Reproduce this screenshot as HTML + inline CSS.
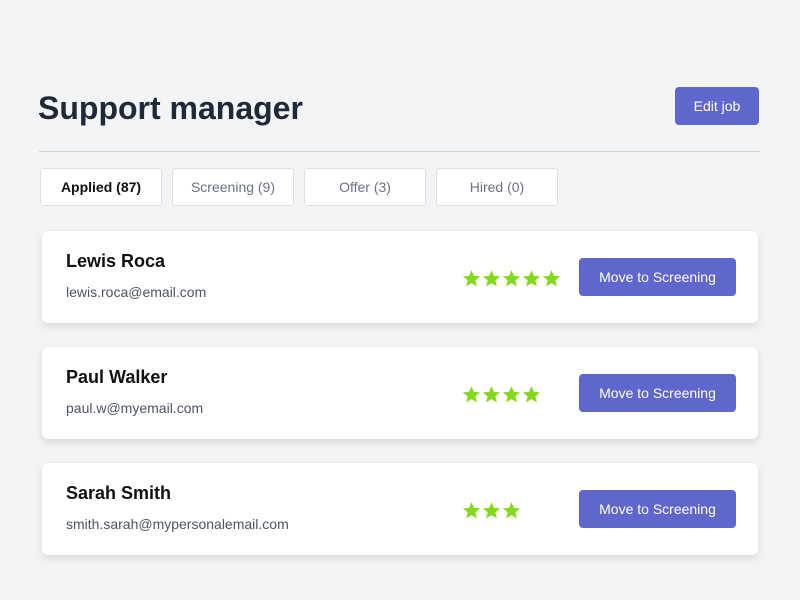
<!DOCTYPE html>
<html><head><style>
body{margin:0;width:800px;height:600px;background:#f3f4f6;font-family:"Liberation Sans",sans-serif;position:relative;overflow:hidden}
.abs{position:absolute}
h1{position:absolute;left:38px;top:88px;margin:0;font-size:32px;font-weight:bold;color:#1f2937;line-height:40px}
.edit{left:675px;top:87px;width:84px;height:38px;background:#5f67cd;color:#fff;border-radius:4px;font-size:14px;line-height:38px;text-align:center}
.line{left:39px;top:151px;width:721px;height:1px;background:#d1d5db}
.tab{top:168px;width:120px;height:36px;border:1px solid #dcdfe4;background:#fff;border-radius:3px;font-size:14px;line-height:36px;text-align:center;color:#6b7280}
.card{left:42px;width:716px;height:92px;background:#fff;border-radius:6px;box-shadow:0 3px 8px rgba(0,0,0,0.12)}
.name{position:absolute;left:24px;top:20px;font-size:18px;font-weight:bold;color:#111}
.mail{position:absolute;left:24px;top:53px;font-size:14px;color:#4b5563}
.stars{position:absolute;left:420px;top:38px;height:19px;display:flex;gap:1px}
.btn{position:absolute;left:537px;top:27px;width:157px;height:38px;background:#5f67cd;color:#fff;border-radius:4px;font-size:14px;line-height:38px;text-align:center}
</style></head><body>
<h1>Support manager</h1>
<div class="abs edit">Edit job</div>
<div class="abs line"></div>
<div class="abs tab" style="left:40px;color:#111;font-weight:bold">Applied (87)</div>
<div class="abs tab" style="left:172px">Screening (9)</div>
<div class="abs tab" style="left:304px">Offer (3)</div>
<div class="abs tab" style="left:436px">Hired (0)</div>
<svg width="0" height="0" style="position:absolute"><defs><symbol id="s" viewBox="0 0 24 24"><path fill="#84d91c" d="M12 1.5l3.1 7.2 7.8.6-6 5.1 1.9 7.6L12 17.9 5.2 22l1.9-7.6-6-5.1 7.8-.6z"/></symbol></defs></svg>
<div class="abs card" style="top:231px"><div class="name">Lewis Roca</div><div class="mail">lewis.roca@email.com</div>
<div class="stars"><svg width="19" height="19"><use href="#s"/></svg><svg width="19" height="19"><use href="#s"/></svg><svg width="19" height="19"><use href="#s"/></svg><svg width="19" height="19"><use href="#s"/></svg><svg width="19" height="19"><use href="#s"/></svg></div>
<div class="btn">Move to Screening</div></div>
<div class="abs card" style="top:347px"><div class="name">Paul Walker</div><div class="mail">paul.w@myemail.com</div>
<div class="stars"><svg width="19" height="19"><use href="#s"/></svg><svg width="19" height="19"><use href="#s"/></svg><svg width="19" height="19"><use href="#s"/></svg><svg width="19" height="19"><use href="#s"/></svg></div>
<div class="btn">Move to Screening</div></div>
<div class="abs card" style="top:463px"><div class="name">Sarah Smith</div><div class="mail">smith.sarah@mypersonalemail.com</div>
<div class="stars"><svg width="19" height="19"><use href="#s"/></svg><svg width="19" height="19"><use href="#s"/></svg><svg width="19" height="19"><use href="#s"/></svg></div>
<div class="btn">Move to Screening</div></div>
</body></html>
